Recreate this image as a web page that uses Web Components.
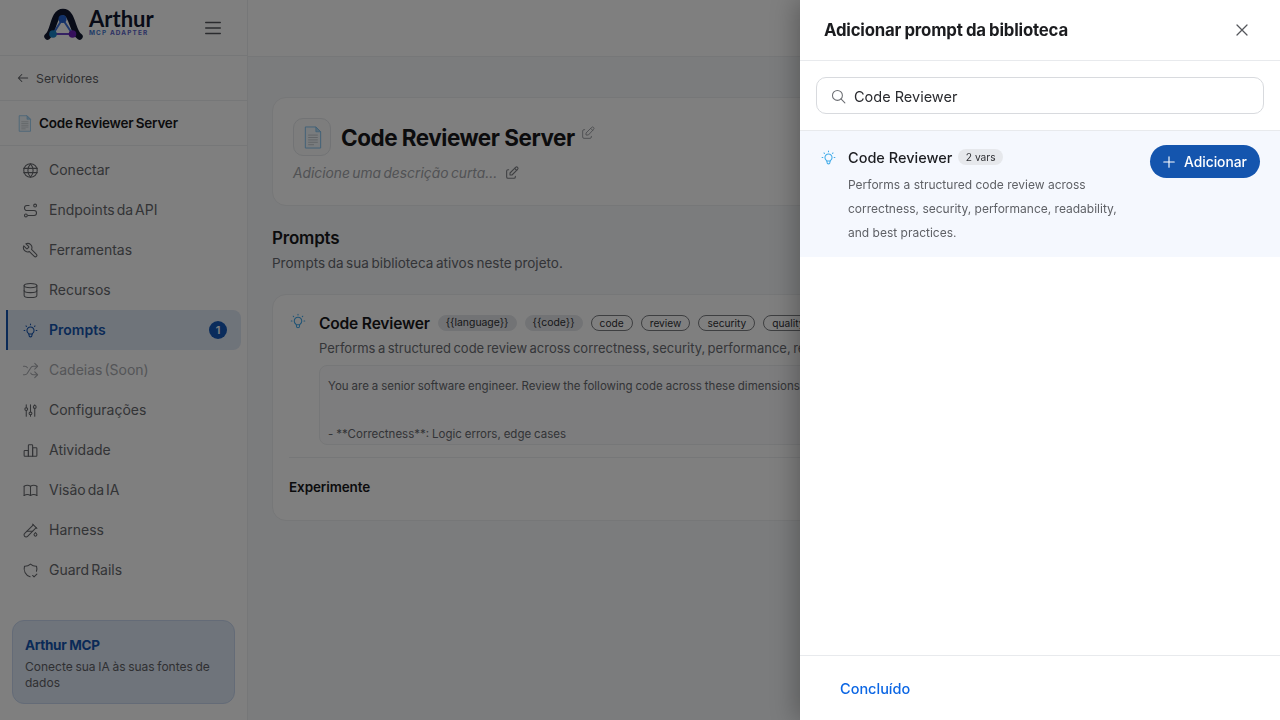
<!DOCTYPE html>
<html lang="pt">
<head>
<meta charset="utf-8">
<title>Code Reviewer Server</title>
<style>
  html, body { margin: 0; height: 100%; overflow: hidden; }
  body { font-family: Inter, "Noto Sans", sans-serif; color: #18181b; background: #f6f8fb; }
</style>
</head>
<body>
<app-shell>
  <app-sidebar slot="side"></app-sidebar>
  <server-page slot="main"></server-page>
  <library-drawer slot="drawer"></library-drawer>
</app-shell>

<script>
'use strict';

const ICONS = {
  globe: '<circle cx="12" cy="12" r="9.5"/><path d="M12 2.5a14 14 0 0 0 0 19 14 14 0 0 0 0-19z"/><path d="M2.5 9h19M2.5 15h19"/>',
  route: '<circle cx="5.5" cy="19" r="2"/><circle cx="18.5" cy="5" r="2"/><path d="M8.5 19h8.5a3.5 3.5 0 0 0 0-7H7a3.5 3.5 0 0 1 0-7h3"/>',
  tool: '<g transform="translate(24 0) scale(-1 1)"><path d="M14.7 6.3a1 1 0 0 0 0 1.4l1.6 1.6a1 1 0 0 0 1.4 0l3.77-3.77a6 6 0 0 1-7.94 7.94l-6.91 6.91a2.12 2.12 0 0 1-3-3l6.91-6.91a6 6 0 0 1 7.94-7.94l-3.76 3.76z"/></g>',
  database: '<ellipse cx="12" cy="5" rx="9" ry="3"/><path d="M3 5v14a9 3 0 0 0 18 0V5"/><path d="M3 12a9 3 0 0 0 18 0"/>',
  bulb: '<path d="M3 12h1m8-9v1m8 8h1M5.6 5.6l.7.7m12.1-.7-.7.7"/><path d="M9 16a5 5 0 1 1 6 0 3.5 3.5 0 0 0-1 3 2 2 0 0 1-4 0 3.5 3.5 0 0 0-1-3"/><path d="M9.7 17h4.6"/>',
  shuffle: '<path d="m18 14 4 4-4 4"/><path d="m18 2 4 4-4 4"/><path d="M2 18h2a4 4 0 0 0 3.3-1.7l5.4-8.6A4 4 0 0 1 16 6h6"/><path d="M2 6h2a4 4 0 0 1 3.6 2.2"/><path d="M22 18h-6a4 4 0 0 1-3.3-1.8l-.4-.5"/>',
  sliders: '<path d="M4 10a2 2 0 1 0 4 0 2 2 0 0 0-4 0"/><path d="M6 4v4M6 12v8"/><path d="M10 16a2 2 0 1 0 4 0 2 2 0 0 0-4 0"/><path d="M12 4v10M12 18v2"/><path d="M16 7a2 2 0 1 0 4 0 2 2 0 0 0-4 0"/><path d="M18 4v1M18 9v11"/>',
  chart: '<path d="M3 13a1 1 0 0 1 1-1h4a1 1 0 0 1 1 1v7H4a1 1 0 0 1-1-1z"/><path d="M15 9a1 1 0 0 1 1-1h4a1 1 0 0 1 1 1v10a1 1 0 0 1-1 1h-5z"/><path d="M9 5a1 1 0 0 1 1-1h4a1 1 0 0 1 1 1v15H9z"/>',
  book: '<path d="M3 19a9 9 0 0 1 9 0 9 9 0 0 1 9 0"/><path d="M3 6a9 9 0 0 1 9 0 9 9 0 0 1 9 0"/><path d="M3 6v13M12 6v13M21 6v13"/>',
  tube: '<path d="m20 8.04-12.12 12.12a2.86 2.86 0 1 1-4.04-4.04L15.96 4"/><path d="M7 13h8"/><path d="m19 15 1.5 1.6a2 2 0 1 1-3 0z"/><path d="m15 3 6 6"/>',
  shield: '<path d="M11.46 20.85A12 12 0 0 1 3.5 6 12 12 0 0 0 12 3a12 12 0 0 0 8.5 3 12 12 0 0 1-.09 7.06"/><path d="m15 19 2 2 4-4"/>',
  edit: '<path d="M7 7H6a2 2 0 0 0-2 2v9a2 2 0 0 0 2 2h9a2 2 0 0 0 2-2v-1"/><path d="M20.39 6.59a2.1 2.1 0 0 0-2.97-2.97L9 12v3h3z"/><path d="m16 5 3 3"/>',
  menu: '<path d="M4 6h16M4 12h16M4 18h16"/>',
  back: '<path d="M20 12H4M10 6l-6 6 6 6"/>',
  search: '<circle cx="10.5" cy="10.5" r="7"/><path d="m21 21-5.5-5.5"/>',
  close: '<path d="M18 6 6 18M6 6l12 12"/>',
  plus: '<path d="M12 5v14M5 12h14"/>'
};

function icon(name, size, width) {
  return `<svg width="${size}" height="${size}" viewBox="0 0 24 24" fill="none" stroke="currentColor"
    stroke-width="${width || 1.5}" stroke-linecap="round" stroke-linejoin="round" aria-hidden="true">${ICONS[name]}</svg>`;
}

// the page emoji, drawn since no emoji font can be relied on
function pageIcon(size) {
  return `<svg width="${size}" height="${size}" viewBox="0 0 24 24" aria-hidden="true">
    <path d="M4.5 1h11l5 5v17h-16z" fill="#f2f8fc" stroke="#7fc0ee" stroke-width="1"/>
    <path d="M15.500 1v5h5z" fill="#b4daf4" stroke="#7fc0ee" stroke-width=".8"/>
    <path d="M7.500 9.500h10M7.500 12h10M7.500 14.500h10M7.500 17h10M7.500 19.500h6" stroke="#bcc1c6" stroke-width=".9"/>
  </svg>`;
}

class BaseElement extends HTMLElement {
  constructor() {
    super();
    this.root = this.attachShadow({mode: 'open'});
  }
}

class AppShell extends BaseElement {
  connectedCallback() {
    this.root.innerHTML = `
  <style>
    :host { display: flex; height: 100vh; position: relative; overflow: hidden; }
    .scrim { position: absolute; inset: 0; background: rgba(0,0,0,.5); backdrop-filter: blur(.5px); }
    .drawer { position: absolute; top: 0; right: 0; bottom: 0; width: 480px; }
  </style>
  <slot name="side"></slot>
  <slot name="main"></slot>
  <div class="scrim"></div>
  <div class="drawer"><slot name="drawer"></slot></div>
    `;
  }
}

class ArthurLogo extends BaseElement {
  connectedCallback() {
    this.root.innerHTML = `
  <style>
    :host { display: flex; align-items: center; gap: 6px; }
    .name { font: 700 22px/18px Lato, Inter, sans-serif; color: #10172f; }
    .sub { font: 700 6.4px/7px Inter, sans-serif; letter-spacing: 1.15px; color: #3f78d0; white-space: nowrap; margin-top: 2px; }
    .sub span { color: #5a62c8; }
    svg { display: block; }
  </style>
  <svg width="39" height="32" viewBox="0 0 39 32">
    <path d="M3.500 28.500C10 24 9 4 19 4s9 20 16.500 24.500" fill="none" stroke="#10172f" stroke-width="6.500" stroke-linecap="round"/>
    <path d="M18.500 11 9 26h19.500z" fill="none" stroke="#3a6fd8" stroke-width="2"/>
    <path d="M9 26h19.500" stroke="#6a46c8" stroke-width="2"/>
    <circle cx="18.500" cy="11" r="4" fill="#2563d0"/>
    <circle cx="9" cy="26" r="3.800" fill="#1b83c4"/>
    <circle cx="28.500" cy="26" r="3.800" fill="#6b21b8"/>
  </svg>
  <div>
    <div class="name">Arthur</div>
    <div class="sub">MCP <span>ADAPTER</span></div>
  </div>
    `;
  }
}

class NavItem extends BaseElement {
  connectedCallback() {
    const badge = this.getAttribute('badge');
    this.root.innerHTML = `
  <style>
    :host { display: flex; align-items: center; height: 40px; box-sizing: border-box;
      margin-left: 6px; margin-right: 6px; padding-left: 14px; gap: 10px; font-size: 14px; word-spacing: -2px;
      color: #66686d; border-left: 2px solid transparent; border-radius: 0 8px 8px 0; }
    :host([active]) { background: #dfe8f5; color: #1455ae; border-left-color: #1455ae; font-weight: 600; }
    :host([disabled]) { color: #a9abb0; }
    svg { flex: none; }
    .label { padding-bottom: 1px; }
    .badge { margin-left: auto; margin-right: 14px; width: 18px; height: 18px; border-radius: 50%;
      background: #1459b8; color: #fff; font: 600 11px/18px Inter, sans-serif; text-align: center; }
  </style>
  ${icon(this.getAttribute('icon'), 17, 1.5)}
  <span class="label"><slot></slot></span>
  ${badge ? `<span class="badge">${badge}</span>` : ''}
    `;
  }
}

class AppSidebar extends BaseElement {
  connectedCallback() {
    this.root.innerHTML = `
  <style>
    :host { display: flex; flex-direction: column; flex: none; width: 248px; box-sizing: border-box;
      height: 100vh; background: #fff; border-right: 1px solid #eceef0; }
    .brand { display: flex; align-items: center; height: 56px; box-sizing: border-box; padding-left: 44px;
      padding-bottom: 8px; border-bottom: 1px solid #eceef0; }
    .toggle { margin-left: auto; margin-right: 23px; margin-top: 8px; color: #55575c; display: flex; }
    .back { display: flex; align-items: center; gap: 6px; height: 45px; box-sizing: border-box; padding-left: 16px; font-size: 12.300px;
      color: #5f6166; border-bottom: 1px solid #eceef0; }
    .server { display: flex; align-items: center; gap: 6px; height: 45px; box-sizing: border-box; padding-left: 16px; font-size: 13.500px;
      font-weight: 600; color: #18181b; border-bottom: 1px solid #eceef0; letter-spacing: -.2px; word-spacing: -1px; }
    nav { display: flex; flex-direction: column; padding-top: 4px; }
    .promo { margin: auto 12px 16px; height: 84px; box-sizing: border-box; padding: 15px 12px; border-radius: 12px;
      background: #dee8f6; border: 1px solid #c8d7ef; }
    .promo b { display: block; font-size: 13.500px; font-weight: 700; color: #1455ae; letter-spacing: -.3px; margin-bottom: 5px; line-height: 18px; }
    .promo p { margin: 0; font-size: 12px; word-spacing: -.7px; line-height: 16px; color: #5f6166; }
  </style>
  <div class="brand">
    <arthur-logo></arthur-logo>
    <span class="toggle">${icon('menu', 22, 1.4)}</span>
  </div>
  <div class="back">${icon('back', 14, 1.8)}<span>Servidores</span></div>
  <div class="server">${pageIcon(17)}<span>Code Reviewer Server</span></div>
  <nav>
    <nav-item icon="globe">Conectar</nav-item>
    <nav-item icon="route">Endpoints da API</nav-item>
    <nav-item icon="tool">Ferramentas</nav-item>
    <nav-item icon="database">Recursos</nav-item>
    <nav-item icon="bulb" active badge="1">Prompts</nav-item>
    <nav-item icon="shuffle" disabled>Cadeias (Soon)</nav-item>
    <nav-item icon="sliders">Configurações</nav-item>
    <nav-item icon="chart">Atividade</nav-item>
    <nav-item icon="book">Visão da IA</nav-item>
    <nav-item icon="tube">Harness</nav-item>
    <nav-item icon="shield">Guard Rails</nav-item>
  </nav>
  <div class="promo">
    <b>Arthur MCP</b>
    <p>Conecte sua IA às suas fontes de dados</p>
  </div>
    `;
  }
}

class TagPill extends BaseElement {
  connectedCallback() {
    this.root.innerHTML = `
  <style>
    :host { display: inline-block; flex: none; height: 14px; line-height: 14px; padding: 0 8px; border-radius: 9px;
      font-size: 10.200px; color: #2f3034; border: 1px solid #7c7e82; }
    :host([filled]) { background: #e5e7eb; border-color: #e5e7eb; font-size: 10.400px; padding: 0 7px; }
  </style>
  <slot></slot>
    `;
  }
}

class PromptCard extends BaseElement {
  connectedCallback() {
    this.root.innerHTML = `
  <style>
    :host { display: block; background: #fff; border: 1px solid #eceef0; border-radius: 14px; padding: 15px 16px 16px; box-sizing: border-box; height: 227px; }
    .top { display: flex; gap: 12px; }
    .bulb { color: #3fa7ea; flex: none; margin-top: 2px; display: flex; height: 20px; }
    .body { flex: 1; min-width: 0; }
    .line { display: flex; align-items: center; gap: 8px; height: 26px; }
    h3 { margin: 0; font-size: 15.600px; font-weight: 600; letter-spacing: -.2px; color: #18181b; white-space: nowrap; }
    .desc { margin: 0; font-size: 13px; word-spacing: -1.2px; line-height: 24px; white-space: nowrap; color: #6a6c72; }
    pre { margin: 5px 0 0; height: 80px; box-sizing: border-box; overflow: hidden; padding: 12px 8px; border: 1px solid #eceef0; border-radius: 8px;
      font: 400 11.500px/16px Inter, sans-serif; word-spacing: -.3px; color: #66686e; background: #fbfbfc; }
    .try { border-top: 1px solid #eceef0; margin-top: 12px; padding-top: 20px; font-size: 13.500px; line-height: 18px; font-weight: 600; color: #18181b; letter-spacing: -.1px; }
  </style>
  <div class="top">
    <span class="bulb">${icon('bulb', 18, 1.4)}</span>
    <div class="body">
      <div class="line">
        <h3>Code Reviewer</h3>
        <tag-pill filled>{{language}}</tag-pill>
        <tag-pill filled>{{code}}</tag-pill>
        <tag-pill>code</tag-pill>
        <tag-pill>review</tag-pill>
        <tag-pill>security</tag-pill>
        <tag-pill>quality</tag-pill>
      </div>
      <p class="desc">Performs a structured code review across correctness, security, performance, readability, and best practices.</p>
      <pre>You are a senior software engineer. Review the following code across these dimensions:


- **Correctness**: Logic errors, edge cases</pre>
    </div>
  </div>
  <div class="try">Experimente</div>
    `;
  }
}

class ServerPage extends BaseElement {
  connectedCallback() {
    this.root.innerHTML = `
  <style>
    :host { display: block; flex: 1; min-width: 0; height: 100vh; background: #f6f8fb; }
    header { height: 57px; box-sizing: border-box; background: #fff; border-bottom: 1px solid #eceef0; }
    .content { padding: 40px 24px; display: flex; flex-direction: column; }
    .hero { background: #fff; border: 1px solid #eceef0; border-radius: 14px; height: 109px; box-sizing: border-box; padding: 20px; }
    .title { display: flex; align-items: center; gap: 10px; height: 38px; }
    .logo { width: 38px; height: 38px; box-sizing: border-box; border: 1px solid #e4e6ea; border-radius: 10px; display: flex; align-items: center; justify-content: center; background: #fafafa; }
    h1 { margin: 0; font-size: 22.500px; font-weight: 700; letter-spacing: -.5px; color: #18181b; }
    .ed-wrap { color: #9a9ca1; display: flex; margin: -8px 0 0 -5px; }
    .sub { display: flex; align-items: center; gap: 7px; margin-top: 7px; font-size: 13.800px; word-spacing: -1.5px; font-style: italic; color: #a2a4a9; line-height: 20px; }
    .sub span:last-child { color: #7d7f84; display: flex; }
    h2 { margin: 21px 0 0; font-size: 17px; line-height: 22px; font-weight: 600; color: #18181b; letter-spacing: -.2px; }
    .lead { margin: 4px 0 21px; font-size: 13.500px; word-spacing: -1.2px; line-height: 20px; color: #66686e; }
  </style>
  <header></header>
  <div class="content">
    <div class="hero">
      <div class="title">
        <span class="logo">${pageIcon(23)}</span>
        <h1>Code Reviewer Server</h1>
        <span class="ed-wrap">${icon('edit', 16, 1.4)}</span>
      </div>
      <div class="sub"><span>Adicione uma descrição curta...</span><span>${icon('edit', 16, 1.6)}</span></div>
    </div>
    <h2>Prompts</h2>
    <p class="lead">Prompts da sua biblioteca ativos neste projeto.</p>
    <prompt-card></prompt-card>
  </div>
    `;
  }
}

class LibraryDrawer extends BaseElement {
  connectedCallback() {
    this.root.innerHTML = `
  <style>
    :host { display: flex; flex-direction: column; height: 100%; background: #fff; box-shadow: -4px 0 24px rgba(0,0,0,.28); }
    header { display: flex; align-items: center; justify-content: space-between; height: 61px; box-sizing: border-box;
      padding: 0 28px 0 24px; border-bottom: 1px solid #e8eaed; flex: none; }
    h2 { margin: 0; font-size: 16.800px; font-weight: 700; color: #1b1c1f; letter-spacing: -.2px; word-spacing: -.5px; }
    header span { color: #55575c; display: flex; }
    .search { padding: 16px; border-bottom: 1px solid #e8eaed; flex: none; }
    .box { display: flex; align-items: center; gap: 7px; height: 37px; box-sizing: border-box; padding: 1px 13px 0;
      border: 1px solid #d8dade; border-radius: 10px; font-size: 14.500px; color: #2a2b2f; }
    .box span { color: #6c6e73; display: flex; }
    .row { display: flex; background: #f5f8fe; height: 126px; box-sizing: border-box; padding: 13px 20px 0 20px; flex: none; }
    .bulb { color: #42ace9; flex: none; width: 28px; display: flex; height: 22px; align-items: center; margin-top: 2px; }
    .info { flex: 1; min-width: 0; }
    .name { display: flex; align-items: center; gap: 6px; height: 26px; }
    .name b { font-size: 14.500px; font-weight: 500; color: #1d1e22; }
    .count { height: 16px; line-height: 16px; padding: 0 7.500px; border-radius: 8px; background: #e6e8ec; font-size: 10.200px; color: #2f3034; }
    .info p { margin: 3px 0 0; font-size: 12px; line-height: 24px; color: #5f6166; width: 280px; }
    button { flex: none; display: flex; align-items: center; gap: 6px; height: 33px; width: 110px; box-sizing: border-box; padding: 0 10px; margin-top: 1px; border: 0; border-radius: 17px;
      background: #1455ae; color: #fff; font: 500 13.800px Inter, sans-serif; }
    .list { flex: 1; }
    footer { height: 65px; box-sizing: border-box; flex: none; border-top: 1px solid #e8eaed; display: flex; align-items: center; padding-left: 40px; font-size: 14.500px; font-weight: 500; color: #0b66e4; }
  </style>
  <header>
    <h2>Adicionar prompt da biblioteca</h2>
    <span>${icon('close', 20, 1.5)}</span>
  </header>
  <div class="search">
    <div class="box"><span>${icon('search', 17, 1.5)}</span><div>Code Reviewer</div></div>
  </div>
  <div class="list">
    <div class="row">
      <span class="bulb">${icon('bulb', 17, 1.5)}</span>
      <div class="info">
        <div class="name"><b>Code Reviewer</b><span class="count">2 vars</span></div>
        <p>Performs a structured code review across correctness, security, performance, readability, and best practices.</p>
      </div>
      <button>${icon('plus', 18, 1.5)}<span>Adicionar</span></button>
    </div>
  </div>
  <footer>Concluído</footer>
    `;
  }
}

customElements.define('arthur-logo', ArthurLogo);
customElements.define('nav-item', NavItem);
customElements.define('tag-pill', TagPill);
customElements.define('prompt-card', PromptCard);
customElements.define('app-sidebar', AppSidebar);
customElements.define('server-page', ServerPage);
customElements.define('library-drawer', LibraryDrawer);
customElements.define('app-shell', AppShell);
</script>
</body>
</html>
